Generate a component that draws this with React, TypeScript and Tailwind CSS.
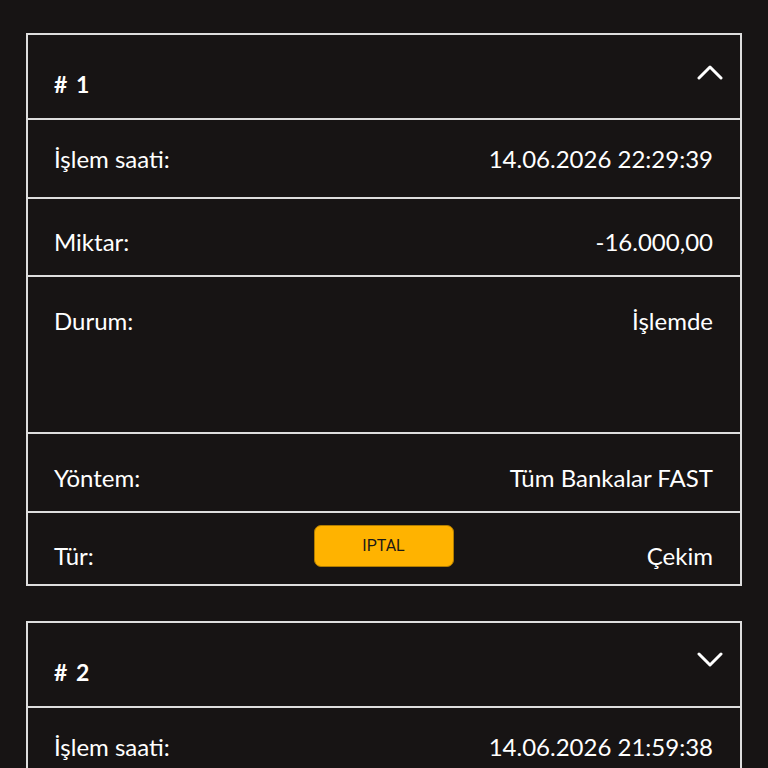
import React from "react";

type Row = { label: string; value: string; pt: number; h: number };

const Chevron = ({ up }: { up: boolean }) => (
  <svg width="26" height="16" viewBox="0 0 26 16" className="mt-[29px] mr-[17px]">
    <polyline
      points={up ? "2,14 13,3 24,14" : "2,2 13,13 24,2"}
      fill="none"
      stroke="#ffffff"
      strokeWidth="3"
      strokeLinecap="round"
      strokeLinejoin="round"
    />
  </svg>
);

const InfoRow = ({ row }: { row: Row }) => (
  <div
    className="flex justify-between border-t-2 border-[#dedede] pl-[26px] pr-[27px] text-[24px] leading-[30px] text-white"
    style={{ height: row.h, paddingTop: row.pt }}
  >
    <span>{row.label}</span>
    <span>{row.value}</span>
  </div>
);

const TransactionCard = ({ no, open, time }: { no: number; open: boolean; time: string }) => {
  const rows: Row[] = open
    ? [
        { label: "İşlem saati:", value: time, pt: 24, h: 79 },
        { label: "Miktar:", value: "-16.000,00", pt: 28, h: 78 },
        { label: "Durum:", value: "İşlemde", pt: 29, h: 157 },
        { label: "Yöntem:", value: "Tüm Bankalar FAST", pt: 29, h: 79 },
      ]
    : [{ label: "İşlem saati:", value: time, pt: 24, h: 79 }];

  return (
    <div className="border-2 border-[#dedede] bg-[#171414]">
      <div className="flex h-[83px] justify-between pl-[26px]">
        <span className="pt-[35px] text-[23px] leading-[28px] font-bold tracking-[1.5px] text-white"># {no}</span>
        <Chevron up={open} />
      </div>
      {rows.map((r) => (
        <InfoRow key={r.label} row={r} />
      ))}
      {open && (
        <div className="grid h-[73px] grid-cols-[1fr_auto_1fr] items-start border-t-2 border-[#dedede] pl-[26px] pr-[27px] text-[24px] leading-[30px] text-white">
          <span className="pt-[28px]">Tür:</span>
          <button className="mt-[12px] flex h-[42px] w-[140px] items-center justify-center rounded-[7px] border border-[#b07c00] bg-[#ffb300] font-['Roboto',sans-serif] text-[16px] text-[#1c1a16]">
            IPTAL
          </button>
          <span className="pt-[28px] text-right">Çekim</span>
        </div>
      )}
    </div>
  );
};

export default function App() {
  return (
    <div className="min-h-[768px] bg-[#171414] pt-[33px] pl-[26px] pr-[26px] font-['Lato',sans-serif]">
      <div className="flex flex-col gap-[35px]">
        <TransactionCard no={1} open={true} time="14.06.2026 22:29:39" />
        <TransactionCard no={2} open={false} time="14.06.2026 21:59:38" />
      </div>
    </div>
  );
}
